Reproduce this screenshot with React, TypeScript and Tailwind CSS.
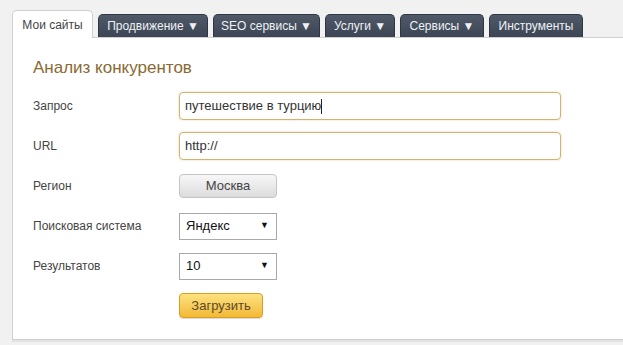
import React from 'react';

const tabs = [
  { label: 'Продвижение ▼', w: 'w-[110px]' },
  { label: 'SEO сервисы ▼', w: 'w-[107px]' },
  { label: 'Услуги ▼', w: 'w-[70px]' },
  { label: 'Сервисы ▼', w: 'w-[84px]' },
  { label: 'Инструменты', w: 'w-[94px]' },
];

function Label({ children }: { children: React.ReactNode }) {
  return <div className="flex items-center h-10 text-[12px] text-[#444]">{children}</div>;
}

function Select({ value }: { value: string }) {
  return (
    <div className="flex items-center justify-between w-[98px] h-[27px] border border-[#aaaaaa] bg-white pl-[6px] pr-[7px] text-[13px] text-[#111]">
      <span>{value}</span>
      <span className="text-[9px]">▼</span>
    </div>
  );
}

export default function App() {
  return (
    <div
      className="w-[623px] h-[345px] bg-[#f1f1f1] overflow-hidden pt-[10px]"
      style={{ fontFamily: '"Liberation Sans", Arial, sans-serif' }}
    >
      <div className="flex items-end pl-[12px] gap-[5px] relative z-10">
        <div className="h-[28px] w-[81px] bg-white border border-b-0 border-[#cfcfcf] rounded-t-[5px] flex items-center justify-center text-[12px] text-[#444] -mb-px">
          Мои сайты
        </div>
        {tabs.map((t) => (
          <div
            key={t.label}
            className={`${t.w} h-[23px] rounded-t-[5px] bg-gradient-to-b from-[#4f5968] to-[#3c4554] border border-b-0 border-[#2f3744] flex items-center justify-center text-[12px] text-[#eef1f5] whitespace-nowrap`}
          >
            {t.label}
          </div>
        ))}
      </div>
      <div className="ml-[12px] h-[303px] bg-white border-l border-t border-b border-[#cfcfcf] shadow-[0_2px_0_#e2e2e2] pl-[20px]">
        <div className="mt-[18px] text-[17px] leading-[24px] text-[#8a6a32]">Анализ конкурентов</div>
        <div className="grid grid-cols-[146px_382px] mt-[6px]">
          <Label>Запрос</Label>
          <div className="flex items-center h-10">
            <div className="w-full h-[28px] border border-[#d3b36d] rounded-[4px] shadow-[0_0_2px_rgba(200,160,80,0.5)] flex items-center px-[5px] text-[13px] text-[#333]">
              путешествие в турцию<span className="w-px h-[15px] bg-[#222]" />
            </div>
          </div>
          <Label>URL</Label>
          <div className="flex items-center h-10">
            <div className="w-full h-[28px] border border-[#d3b36d] rounded-[4px] shadow-[0_0_2px_rgba(200,160,80,0.5)] flex items-center px-[5px] text-[13px] text-[#333]">
              http://
            </div>
          </div>
          <Label>Регион</Label>
          <div className="flex items-center h-10">
            <div className="w-[98px] h-[24px] -mt-[1px] rounded-[4px] border border-[#c4c4c4] bg-gradient-to-b from-[#f7f7f7] to-[#dcdcdc] flex items-center justify-center text-[13px] text-[#444]">
              Москва
            </div>
          </div>
          <Label>Поисковая система</Label>
          <div className="flex items-center h-10">
            <Select value="Яндекс" />
          </div>
          <Label>Результатов</Label>
          <div className="flex items-center h-10">
            <Select value="10" />
          </div>
          <div />
          <div className="pt-[7px]">
            <div className="w-[84px] h-[25px] rounded-[4px] border border-[#d8a021] bg-gradient-to-b from-[#fde27e] to-[#f2b933] shadow-[0_1px_1px_rgba(0,0,0,0.15)] flex items-center justify-center text-[13px] text-[#5a4a2a]">
              Загрузить
            </div>
          </div>
        </div>
      </div>
    </div>
  );
}
